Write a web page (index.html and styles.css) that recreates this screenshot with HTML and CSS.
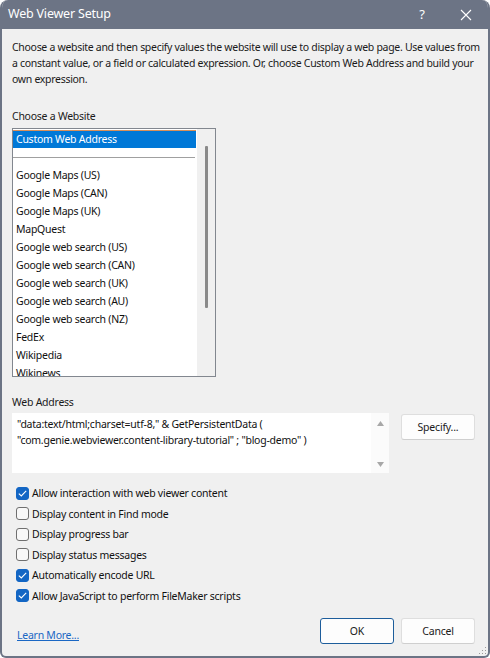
FILE: index.html
```html
<!DOCTYPE html>
<html>
<head>
<meta charset="utf-8">
<link rel="stylesheet" href="styles.css">
</head>
<body>
<div class="window">
  <div class="titlebar">
    <span class="title">Web Viewer Setup</span>
    <span class="help">?</span>
    <span class="close">
      <svg width="12" height="12" viewBox="0 0 12 12"><path d="M1 1L11 11M11 1L1 11" stroke="#fff" stroke-width="1.1" fill="none"/></svg>
    </span>
  </div>
  <div class="content">
    <p class="desc">Choose a website and then specify values the website will use to display a web page. Use values from a constant value, or a field or calculated expression. Or, choose Custom Web Address and build your own expression.</p>

    <div class="label first">Choose a Website</div>
    <div class="listbox">
      <div class="items">
        <div class="item selected">Custom Web Address</div>
        <div class="item sep"><span class="sepline"></span></div>
        <div class="item">Google Maps (US)</div>
        <div class="item">Google Maps (CAN)</div>
        <div class="item">Google Maps (UK)</div>
        <div class="item">MapQuest</div>
        <div class="item">Google web search (US)</div>
        <div class="item">Google web search (CAN)</div>
        <div class="item">Google web search (UK)</div>
        <div class="item">Google web search (AU)</div>
        <div class="item">Google web search (NZ)</div>
        <div class="item">FedEx</div>
        <div class="item">Wikipedia</div>
        <div class="item">Wikinews</div>
      </div>
      <div class="vscroll"><div class="thumb"></div></div>
    </div>

    <div class="label second">Web Address</div>
    <div class="addr-row">
      <div class="addr">
        <div class="addr-text">"data:text/html;charset=utf-8," &amp; GetPersistentData (<br>"com.genie.webviewer.content-library-tutorial" ; "blog-demo" )</div>
        <div class="addr-scroll">
          <svg width="7" height="5" viewBox="0 0 7 5"><path d="M0 5L3.5 0L7 5Z" fill="#a8a8a8"/></svg>
          <svg width="7" height="5" viewBox="0 0 7 5"><path d="M0 0L3.5 5L7 0Z" fill="#a8a8a8"/></svg>
        </div>
      </div>
      <button class="btn specify">Specify...</button>
    </div>

    <div class="checks">
      <label class="check"><span class="box on"><svg width="9" height="7" viewBox="0 0 9 7"><path d="M0.8 3.6L3.3 6L8.2 0.9" stroke="#fff" stroke-width="1.1" fill="none"/></svg></span>Allow interaction with web viewer content</label>
      <label class="check"><span class="box"></span>Display content in Find mode</label>
      <label class="check"><span class="box"></span>Display progress bar</label>
      <label class="check"><span class="box"></span>Display status messages</label>
      <label class="check"><span class="box on"><svg width="9" height="7" viewBox="0 0 9 7"><path d="M0.8 3.6L3.3 6L8.2 0.9" stroke="#fff" stroke-width="1.1" fill="none"/></svg></span>Automatically encode URL</label>
      <label class="check"><span class="box on"><svg width="9" height="7" viewBox="0 0 9 7"><path d="M0.8 3.6L3.3 6L8.2 0.9" stroke="#fff" stroke-width="1.1" fill="none"/></svg></span>Allow JavaScript to perform FileMaker scripts</label>
    </div>

    <div class="footer">
      <a class="learn" href="#">Learn More...</a>
      <div class="buttons">
        <button class="btn ok">OK</button>
        <button class="btn">Cancel</button>
      </div>
    </div>
  </div>
  <span class="grip">
    <svg width="8" height="8" viewBox="0 0 8 8"><g fill="#9a9a9a"><rect x="6" y="0" width="1" height="1"/><rect x="3" y="3" width="1" height="1"/><rect x="6" y="3" width="1" height="1"/><rect x="0" y="6" width="1" height="1"/><rect x="3" y="6" width="1" height="1"/><rect x="6" y="6" width="1" height="1"/></g></svg>
  </span>
</div>
</body>
</html>
```
FILE: styles.css
```css
* { box-sizing: border-box; }
html, body { margin: 0; padding: 0; background: #ffffff; }
body {
  font-family: "Noto Sans", "Open Sans", sans-serif;
  font-size: 10.5px;
  letter-spacing: -0.25px;
  color: #1a1a1a;
}
.window {
  position: relative;
  width: 490px;
  height: 658px;
  background: #f0f0f0;
  border: 2px solid #6c7485;
  border-top: 0;
  border-radius: 8px 8px 6px 6px;
  display: flex;
  flex-direction: column;
  overflow: hidden;
}
.titlebar {
  height: 29px;
  background: #6c7485;
  color: #fff;
  display: flex;
  align-items: center;
  padding-left: 6px;
  flex-shrink: 0;
  letter-spacing: 0;
}
.title { font-size: 12.5px; flex: 1; padding-bottom: 2px; letter-spacing: -0.2px; }
.help { font-size: 13px; width: 20px; text-align: center; margin-right: 24px; padding-bottom: 2px; }
.close { width: 20px; display: flex; justify-content: center; margin-right: 12px; }
.content {
  flex: 1;
  display: flex;
  flex-direction: column;
  padding: 10px 8px 12px 10px;
}
.desc {
  margin: 0 -6px 0 0;
  line-height: 16px;
  letter-spacing: -0.3px;
  color: #1a1a1a;
}
.label { line-height: 16px; }
.label.first { margin-top: 21px; }
.label.second { margin-top: 17px; }
.listbox {
  margin-top: 4px;
  width: 204px;
  height: 249px;
  border: 1px solid #82878f;
  background: #fff;
  display: flex;
  overflow: hidden;
}
.items { flex: 1; padding-top: 1px; overflow: hidden; }
.item {
  height: 18px;
  line-height: 18px;
  padding-left: 3px;
  white-space: nowrap;
  color: #111;
  font-size: 10.5px;
}
.item.selected {
  background: #0078d7;
  color: #fff;
  border-top: 1px solid #d9905a;
  line-height: 16px;
  margin-right: 1px;
}
.item.sep { display: flex; align-items: center; padding-right: 2px; padding-left: 0; }
.sepline { display: block; flex: 1; height: 1px; background: #a0a0a0; }
.vscroll {
  width: 18px;
  background: #f0f0f0;
  display: flex;
  justify-content: center;
  padding-top: 17px;
}
.thumb { width: 3px; height: 162px; background: #8a8a8a; border-radius: 1px; }
.addr-row {
  margin-top: 3px;
  display: flex;
  align-items: flex-start;
}
.addr {
  width: 377px;
  height: 60px;
  background: #fff;
  display: flex;
}
.addr-text {
  flex: 1;
  padding: 3px 0 0 5px;
  line-height: 16px;
  color: #111;
}
.addr-scroll {
  width: 18px;
  display: flex;
  flex-direction: column;
  align-items: center;
  justify-content: space-between;
  padding: 8px 0 6px;
  background: #fbfbfb;
}
.btn {
  font-family: inherit;
  font-size: 10.5px;
  letter-spacing: -0.2px;
  color: #1a1a1a;
  background: #fdfdfd;
  border: 1px solid #dedede;
  border-bottom-color: #cfcfcf;
  border-radius: 3px;
  height: 26px;
  width: 74px;
  padding: 0;
}
.specify { margin-left: 12px; margin-top: 1px; }
.checks {
  margin-top: 10px;
  padding-left: 4px;
  display: flex;
  flex-direction: column;
}
.check {
  height: 20.5px;
  display: flex;
  align-items: center;
  color: #111;
}
.box {
  width: 13px;
  height: 13px;
  border: 1px solid #6f6f6f;
  border-radius: 3px;
  background: #f8f8f8;
  margin-right: 3px;
  display: flex;
  align-items: center;
  justify-content: center;
}
.box.on { background: #1366c4; border-color: #1366c4; }
.footer {
  margin-top: auto;
  display: flex;
  justify-content: space-between;
  align-items: center;
}
.learn {
  color: #1a67c4;
  text-decoration: underline;
  margin-left: 5px;
  margin-top: 7px;
}
.buttons { display: flex; gap: 7px; margin-right: 5px; }
.ok { border: 1px solid #1d5d9b; }
.grip { position: absolute; right: 1px; bottom: 1px; line-height: 0; }
```
